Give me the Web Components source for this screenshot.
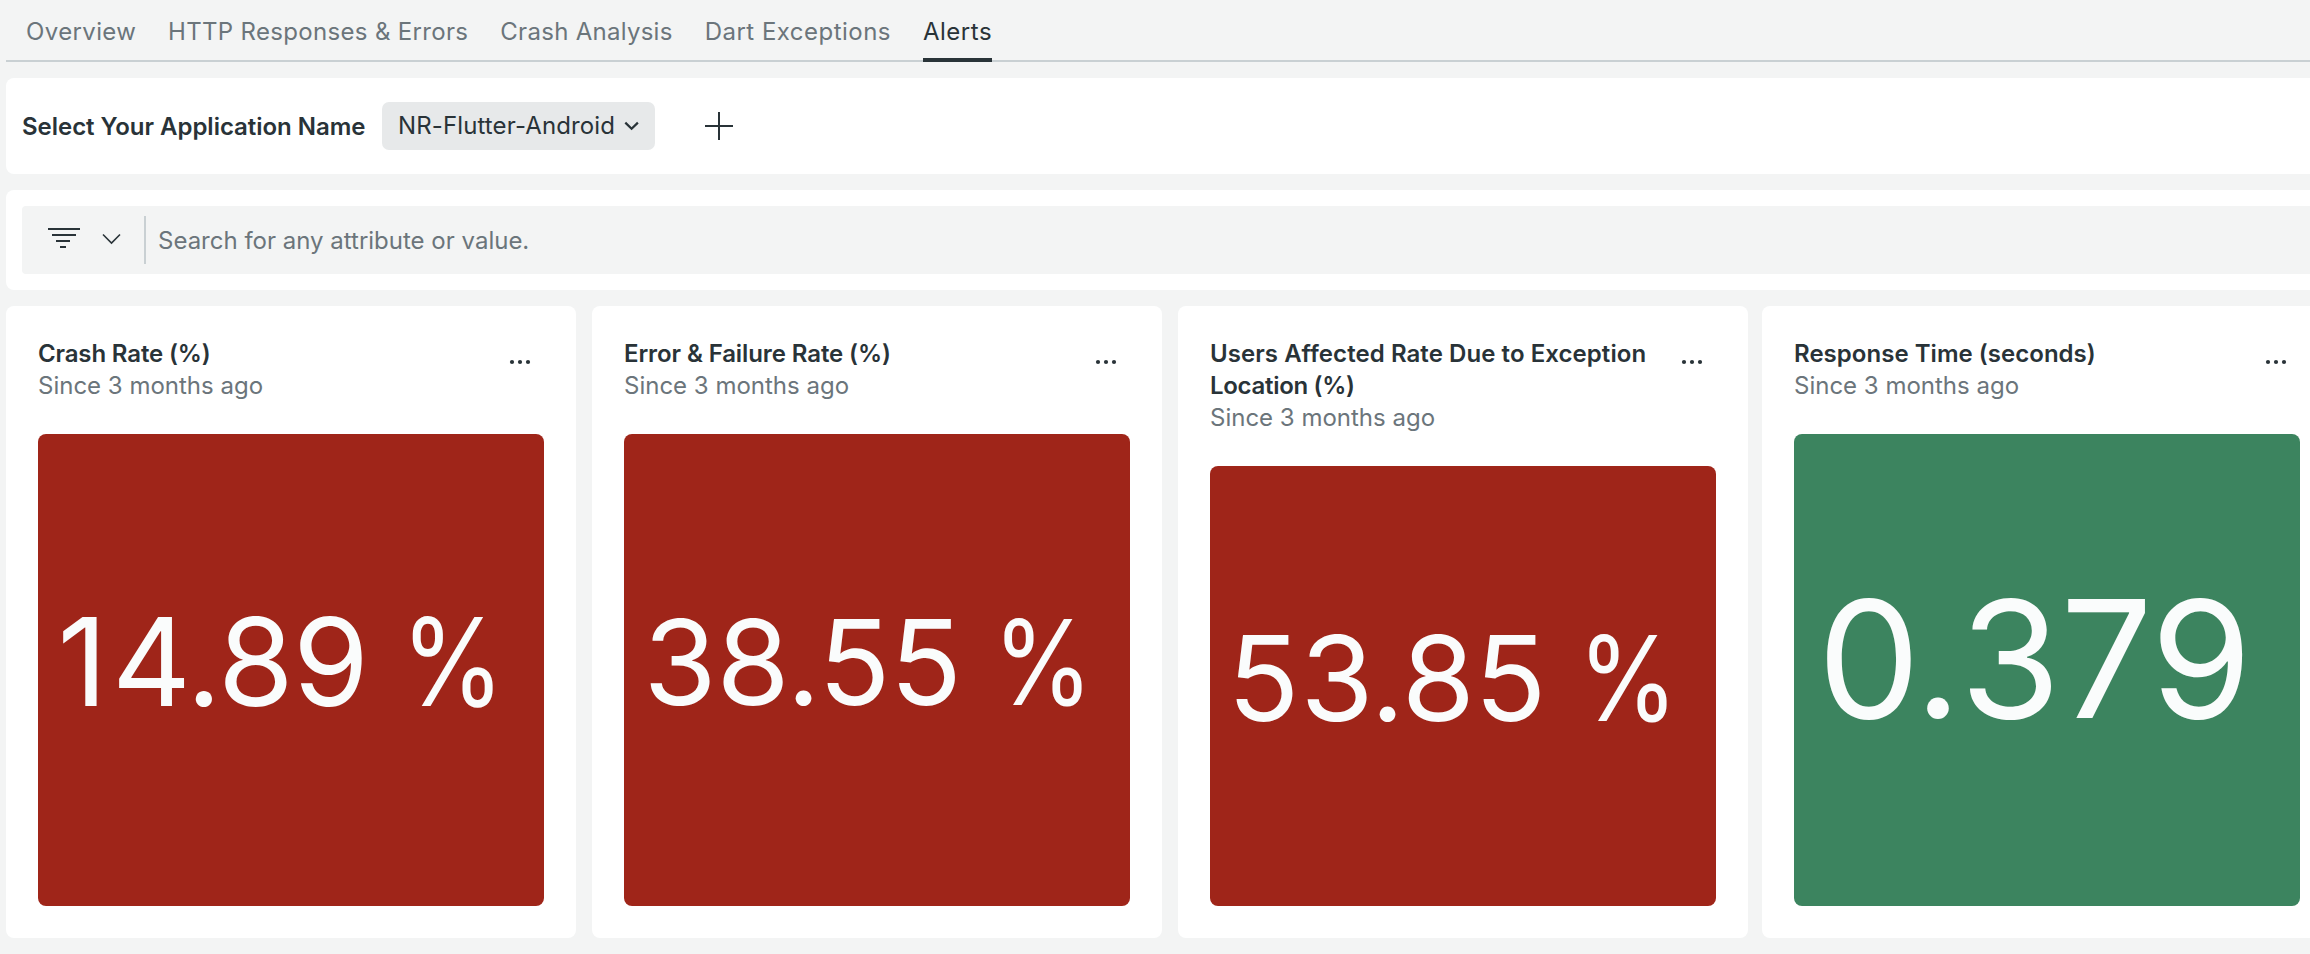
<!DOCTYPE html>
<html lang="en">
<head>
<meta charset="utf-8">
<title>Alerts</title>
<style>
html, body { margin: 0; height: 100%; overflow: hidden; }
body { background: #f3f4f4; color: #293338; font: 400 24px/32px Inter, sans-serif; }
</style>
</head>
<body>
<alerts-dashboard></alerts-dashboard>
<script>
const define = (name, html, setup) => {
  const tpl = document.createElement('template');
  tpl.innerHTML = html;
  customElements.define(name, class extends HTMLElement {
    constructor() {
      super();
      this.attachShadow({ mode: 'open' }).append(tpl.content.cloneNode(true));
    }
    connectedCallback() { if (setup) setup(this, this.shadowRoot); }
  });
};

define('tab-item', `<style>
:host { display: block; box-sizing: border-box; height: 62px; padding-top: 16px; color: #6b757b; white-space: nowrap; }
:host([active]) { color: #293338; border-bottom: 4px solid #293338; }
</style><slot></slot>`);

define('tab-bar', `<style>
:host { display: flex; box-sizing: border-box; height: 62px; padding-left: 20px; background: linear-gradient(#c9d0d3, #c9d0d3) bottom / 100% 2px no-repeat; }
</style><slot></slot>`);

define('surface-panel', `<style>
:host { display: flex; box-sizing: border-box; background: #fff; border-radius: 8px 0 0 8px; }
</style><slot></slot>`);

define('app-picker', `<style>
:host { display: flex; align-items: center; width: 100%; }
b { font-weight: 600; width: 360px; padding-top: 2px; letter-spacing: -.03px; white-space: nowrap; }
.chip { display: flex; align-items: center; box-sizing: border-box; width: 273px; height: 48px; padding: 0 0 1px 16px; background: #e7e9ea; border-radius: 7px; }
.chip span { width: 226px; letter-spacing: .12px; white-space: nowrap; }
svg { display: block; fill: none; stroke: #293338; }
.plus { margin-left: 50px; }
</style>
<b>Select Your Application Name</b>
<div class="chip"><span>NR-Flutter-Android</span>
<svg width="16" height="12" stroke-width="2.2"><path d="M1.3 2.6l6.3 6.2 6.3-6.2"/></svg></div>
<svg class="plus" width="28" height="28" stroke-width="2"><path d="M14 0v28M0 14h28"/></svg>`);

define('filter-search', `<style>
:host { display: flex; align-items: center; width: 100%; height: 68px; background: #f3f4f4; border-radius: 4px 0 0 4px; }
svg { display: block; fill: none; stroke: #293338; }
.filter { margin: 0 0 4px 26px; }
.chev { margin: 0 0 3px 22px; }
i { width: 2px; height: 48px; margin: 0 12px 0 23px; background: #c9d0d3; }
span { color: #6b757b; padding-top: 1px; white-space: nowrap; }
</style>
<svg class="filter" width="32" height="20" stroke-width="2"><path d="M0 1h32M4 7h24M8 13h14M12 19h6"/></svg>
<svg class="chev" width="19" height="12" stroke-width="1.6"><path d="M1 1.5l8.5 8.5L18 1.5"/></svg>
<i></i><span>Search for any attribute or value.</span>`);

define('billboard-card', `<style>
:host { display: flex; flex-direction: column; box-sizing: border-box; flex: 0 0 570px; height: 632px; padding: 32px; background: #fff; border-radius: 8px; }
header { display: flex; justify-content: space-between; padding-bottom: 32px; }
h2 { margin: 0; width: 450px; font: inherit; font-weight: 600; letter-spacing: var(--title-spacing, 0); }
p { margin: 0; color: #6b757b; }
svg { display: block; margin: 21px 13px 0 0; fill: #293338; }
.value { flex: 1; display: flex; align-items: center; border-radius: 8px; color: #fafcfc; background: var(--tone); padding-left: var(--inset); white-space: pre; }
.num { font-size: var(--size); line-height: 1.21; letter-spacing: var(--spacing); padding-bottom: var(--lift, .125em); }
.num::first-letter { letter-spacing: var(--lead, 0); }
.unit { display: inline-block; line-height: 1; margin-left: -1px; transform: scaleX(.86); transform-origin: left; }
</style>
<header><div><h2><slot></slot></h2><p>Since 3 months ago</p></div>
<svg width="22" height="6"><circle cx="3" cy="3" r="2.1"/><circle cx="11" cy="3" r="2.1"/><circle cx="19" cy="3" r="2.1"/></svg></header>
<div class="value"><div class="num"></div></div>`, (el, root) => {
  const num = root.querySelector('.num');
  const unit = el.getAttribute('unit');
  num.textContent = el.getAttribute('value') + (unit ? ' ' : '');
  if (unit) {
    const span = document.createElement('span');
    span.className = 'unit';
    span.textContent = unit;
    num.append(span);
  }
});

define('alerts-dashboard', `<style>
:host { display: flex; flex-direction: column; gap: 16px; padding-left: 6px; }
.cards { display: flex; gap: 16px; --tone: #9f2519; }
</style>
<tab-bar>
<tab-item style="width:142px;letter-spacing:.38px">Overview</tab-item>
<tab-item style="width:332.3px;letter-spacing:.33px">HTTP Responses &amp; Errors</tab-item>
<tab-item style="width:204.4px;letter-spacing:.28px">Crash Analysis</tab-item>
<tab-item style="width:218.3px;letter-spacing:.48px">Dart Exceptions</tab-item>
<tab-item active style="width:69px;letter-spacing:.5px">Alerts</tab-item>
</tab-bar>
<surface-panel style="height:96px;padding-left:16px"><app-picker></app-picker></surface-panel>
<surface-panel style="height:100px;padding:16px 0 16px 16px"><filter-search></filter-search></surface-panel>
<div class="cards">
<billboard-card value="14.89" unit="%" style="--size:122.4px;--inset:19.5px;--spacing:-.7px;--lead:4.6px;--title-spacing:-.14px">Crash Rate (%)</billboard-card>
<billboard-card value="38.55" unit="%" style="--size:118.3px;--inset:19.4px;--spacing:-.45px;--lead:0px;--title-spacing:-.1px">Error &amp; Failure Rate (%)</billboard-card>
<billboard-card value="53.85" unit="%" style="--size:118.3px;--inset:17.5px;--spacing:-.3px;--lead:1px;--title-spacing:.07px">Users Affected Rate Due to Exception <span style="letter-spacing:-.3px">Location (%)</span></billboard-card>
<billboard-card value="0.379" style="--size:163px;--inset:23.4px;--spacing:-.3px;--lead:-1.5px;--lift:.14em;--tone:#3c845f;--title-spacing:.03px;margin-left:-2px">Response Time (seconds)</billboard-card>
</div>`);
</script>
</body>
</html>
